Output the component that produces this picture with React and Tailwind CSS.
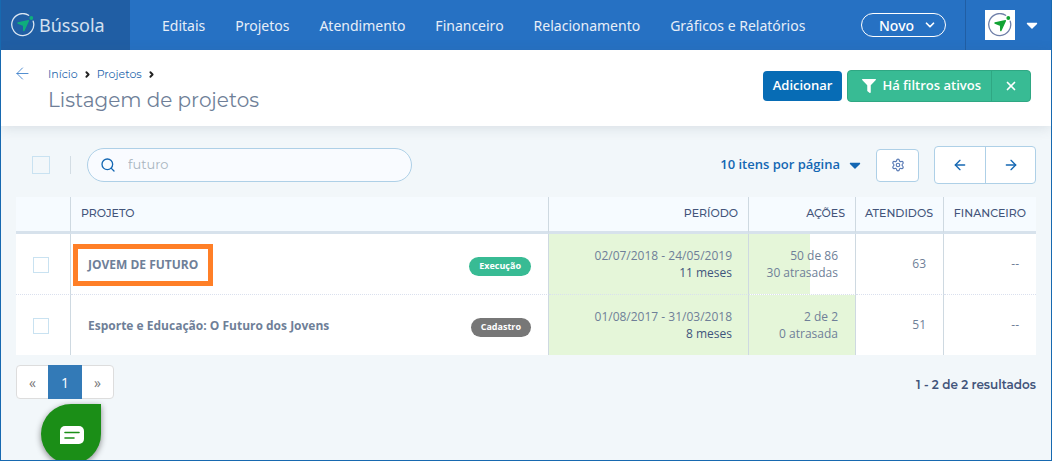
import { ArrowLeft, ArrowRight, ChevronDown, ChevronRight, Search, Settings, X } from "lucide-react";
import { FaCaretDown, FaFilter } from "react-icons/fa";

const menu = [
  "Editais",
  "Projetos",
  "Atendimento",
  "Financeiro",
  "Relacionamento",
  "Gráficos e Relatórios",
];

const projects = [
  {
    id: 1,
    name: "JOVEM DE FUTURO",
    highlighted: true,
    status: "Execução",
    statusColor: "bg-[#38bb94]",
    period: "02/07/2018 - 24/05/2019",
    duration: "11 meses",
    actions: "50 de 86",
    late: "30 atrasadas",
    progress: 58,
    attended: 63,
    financial: "--",
  },
  {
    id: 2,
    name: "Esporte e Educação: O Futuro dos Jovens",
    highlighted: false,
    status: "Cadastro",
    statusColor: "bg-[#777777]",
    period: "01/08/2017 - 31/03/2018",
    duration: "8 meses",
    actions: "2 de 2",
    late: "0 atrasada",
    progress: 100,
    attended: 51,
    financial: "--",
  },
];

const CompassIcon = ({ className, ring, needle }) => (
  <svg viewBox="0 0 24 24" className={className} fill="none" aria-hidden="true">
    <path
      d="M17.6 2.3A11 11 0 1 0 22.2 8.2"
      stroke={ring}
      strokeWidth="1.3"
      strokeLinecap="round"
    />
    <path
      d="M7 10 17.4 7.8 12.8 17.6 12.6 12.3Z"
      fill={needle}
      stroke={needle}
      strokeWidth="1.4"
      strokeLinejoin="round"
    />
    <circle cx="20.3" cy="5" r="1.9" fill={needle} />
  </svg>
);

const CheckBox = ({ label, className }) => (
  <input
    type="checkbox"
    aria-label={label}
    className={`block appearance-none border border-[#c9e2f1] checked:bg-[#0a6cb5] ${className}`}
  />
);

const Navbar = () => (
  <header className="flex h-[50px] items-stretch bg-[#2671c3] text-[#e6eef8]">
    <a href="#" className="flex w-[129px] shrink-0 items-center gap-1 bg-[#205ea4] pl-[10px]">
      <CompassIcon className="size-6 shrink-0" ring="#dbe6f2" needle="#0fae7c" />
      <span className="font-['Noto_Sans',sans-serif] text-[18px] leading-6 text-[#d3e0ef]">
        Bússola
      </span>
    </a>
    <nav className="flex flex-1 items-center gap-[30px] pl-8 font-['Noto_Sans',sans-serif] text-[14px] whitespace-nowrap">
      {menu.map((item) => (
        <a key={item} href="#">
          {item}
        </a>
      ))}
    </nav>
    <div className="flex items-center pr-[19px]">
      <button className="flex h-6 w-[85px] items-center justify-between rounded-full border border-white pr-2 pl-[17px] font-['Noto_Sans',sans-serif] text-[14px] font-medium text-white">
        Novo
        <ChevronDown size={14} strokeWidth={3} />
      </button>
    </div>
    <button
      aria-label="Conta"
      className="flex w-[86px] items-center gap-2 border-l border-[#205ea4] pl-[19px] text-white"
    >
      <span className="flex size-[30px] items-center justify-center bg-white">
        <CompassIcon className="size-6" ring="#6f7fa8" needle="#12a334" />
      </span>
      <FaCaretDown size={18} />
    </button>
  </header>
);

const PageHeader = () => (
  <section className="relative flex h-[76px] justify-between bg-white pr-5 pl-3 shadow-[0_2px_12px_rgba(60,80,100,0.14)]">
    <div className="flex gap-4 pt-4">
      <a href="#" aria-label="Voltar" className="-mt-[2px] h-4 text-[#2671c3]">
        <ArrowLeft size={19} strokeWidth={1} />
      </a>
      <div>
        <nav className="flex h-4 items-center gap-[5px] font-['Montserrat','Inter',sans-serif] text-[11px] text-[#1f67ad]">
          <a href="#">Início</a>
          <ChevronRight size={9} strokeWidth={5} className="text-[#222222]" />
          <a href="#">Projetos</a>
          <ChevronRight size={9} strokeWidth={5} className="text-[#222222]" />
        </nav>
        <h1 className="mt-1 font-['Montserrat','Inter',sans-serif] text-[20px] leading-7 text-[#6f7f98]">
          Listagem de projetos
        </h1>
      </div>
    </div>
    <div className="flex items-center gap-[5px] pb-1 text-[13px] font-semibold text-white">
      <button className="h-[30px] rounded bg-[#076cb5] px-[10px]">Adicionar</button>
      <div className="flex h-8 rounded border border-[#2fa783] bg-[#38bb94]">
        <button className="flex items-center gap-[6px] pr-[10px] pl-[14px]">
          <FaFilter size={14} />
          Há filtros ativos
        </button>
        <button
          aria-label="Limpar filtros"
          className="flex w-[39px] items-center justify-center border-l border-[#2fa783]"
        >
          <X size={14} strokeWidth={3} />
        </button>
      </div>
    </div>
  </section>
);

const Toolbar = () => (
  <div className="flex h-[38px] items-center justify-between">
    <div className="flex items-center">
      <CheckBox label="Selecionar todos" className="ml-4 size-[18px]" />
      <span className="ml-5 h-[18px] border-l border-[#d3dde4]" />
      <label className="ml-4 flex h-[34px] w-[325px] items-center gap-3 rounded-full border border-[#aed0e7] bg-[#f9fbff] pl-3">
        <Search size={16} strokeWidth={2} className="text-[#1467b3]" />
        <input
          type="text"
          aria-label="Buscar projeto"
          defaultValue="futuro"
          className="min-w-0 flex-1 bg-transparent font-['Montserrat','Inter',sans-serif] text-[13px] text-[#a9b5c0] outline-none"
        />
      </label>
    </div>
    <div className="flex items-center">
      <div className="relative mr-3 flex items-center text-[#1467b3]">
        <select
          aria-label="Itens por página"
          className="field-sizing-content appearance-none bg-transparent pr-6 text-[13px] font-semibold"
        >
          <option>10 itens por página</option>
        </select>
        <FaCaretDown size={18} className="pointer-events-none absolute right-0" />
      </div>
      <button
        aria-label="Configurações"
        className="mr-[15px] flex h-[33px] w-[43px] items-center justify-center rounded border border-[#aed0e7] bg-white text-[#5a7bb5]"
      >
        <Settings size={14} strokeWidth={2} />
      </button>
      <div className="flex h-[38px] rounded border border-[#aed0e7] bg-white text-[#1467b3]">
        <button
          aria-label="Página anterior"
          className="flex w-[51px] items-center justify-center border-r border-[#aed0e7]"
        >
          <ArrowLeft size={16} strokeWidth={2} />
        </button>
        <button aria-label="Próxima página" className="flex w-[49px] items-center justify-center">
          <ArrowRight size={16} strokeWidth={2} />
        </button>
      </div>
    </div>
  </div>
);

const ProjectRow = ({ project, last }) => {
  const line = last ? "" : "border-b border-b-[#dae0ee] [border-bottom-style:dotted]";

  return (
    <tr className={last ? "h-[60px]" : "h-[61px]"}>
      <td className={`border-r border-r-[#ced9e1] bg-white pt-[2px] pl-[17px] ${line}`}>
        <CheckBox label={`Selecionar ${project.name}`} className="size-4" />
      </td>
      <td className={`border-r border-r-[#ced9e1] bg-white pt-[2px] pr-[17px] pl-[2px] ${line}`}>
        <div className="flex items-center justify-between">
          <a
            href="#"
            className={`flex h-[42px] items-center border-5 px-[10px] text-[12px] font-bold text-[#6f7f98] ${
              project.highlighted ? "border-[#ff7f27]" : "border-transparent"
            }`}
          >
            {project.name}
          </a>
          <span
            className={`mt-[2px] flex h-[19px] items-center rounded-full px-[10px] text-[9px] font-bold text-white ${project.statusColor}`}
          >
            {project.status}
          </span>
        </div>
      </td>
      <td className={`border-r border-r-[#ced9e1] bg-[#e5f6d9] pr-4 leading-[17px] ${line}`}>
        <p>{project.period}</p>
        <p className="text-[#3f557c]">{project.duration}</p>
      </td>
      <td className={`relative border-r border-r-[#ced9e1] bg-white pr-[17px] leading-[17px] ${line}`}>
        <div
          className="absolute inset-y-0 left-0 bg-[#e5f6d9]"
          style={{ width: `${project.progress}%` }}
        />
        <p className="relative">{project.actions}</p>
        <p className="relative">{project.late}</p>
      </td>
      <td className={`border-r border-r-[#ced9e1] bg-white pr-[17px] ${line}`}>
        {project.attended}
      </td>
      <td className={`bg-white pr-[17px] ${line}`}>{project.financial}</td>
    </tr>
  );
};

const ProjectTable = () => (
  <table className="mt-[13px] w-full table-fixed border-separate border-spacing-0 text-right text-[12px] text-[#6f7f98]">
    <colgroup>
      <col className="w-[55px]" />
      <col />
      <col className="w-[200px]" />
      <col className="w-[107px]" />
      <col className="w-[88px]" />
      <col className="w-[92px]" />
    </colgroup>
    <thead>
      <tr className="h-[37px] bg-[#f6fbff] font-['Montserrat','Inter',sans-serif] text-[11px] text-[#42547a] *:border-b-3 *:border-b-[#d7e2ec] *:pb-[2px] *:font-medium">
        <th className="border-r border-r-[#ced9e1]" />
        <th className="border-r border-r-[#ced9e1] pl-[10px] text-left">PROJETO</th>
        <th className="border-r border-r-[#ced9e1] pr-[10px]">PERÍODO</th>
        <th className="border-r border-r-[#ced9e1] pr-[10px]">AÇÕES</th>
        <th className="border-r border-r-[#ced9e1] pr-[10px]">ATENDIDOS</th>
        <th className="pr-[10px]">FINANCEIRO</th>
      </tr>
    </thead>
    <tbody>
      {projects.map((project, index) => (
        <ProjectRow
          key={project.id}
          project={project}
          last={index === projects.length - 1}
        />
      ))}
    </tbody>
  </table>
);

const Pagination = () => (
  <div className="mt-[10px] flex items-start justify-between">
    <nav className="flex h-[34px] rounded border border-[#dddddd] bg-white text-[#777777]">
      <button aria-label="Anterior" className="w-[31px] text-[14px]">
        «
      </button>
      <button className="-my-px w-[34px] bg-[#337ab7] text-[14px] text-white">1</button>
      <button aria-label="Próxima" className="w-[31px] text-[14px]">
        »
      </button>
    </nav>
    <p className="pt-3 font-['Montserrat','Inter',sans-serif] text-[12px] leading-4 font-semibold text-[#42547a]">
      1 - 2 de 2 resultados
    </p>
  </div>
);

const ChatButton = () => (
  <button
    aria-label="Abrir chat"
    className="absolute -bottom-1 left-10 flex size-[60px] items-center justify-center rounded-full rounded-tr-md bg-[#1b8e17] shadow-[0_2px_6px_rgba(0,0,0,0.45)]"
  >
    <svg viewBox="0 0 24 18" className="mt-[2px] ml-px h-[18px] w-6" aria-hidden="true">
      <path d="M5 0h14a5 5 0 0 1 5 5v8a5 5 0 0 1-5 5H0V5a5 5 0 0 1 5-5Z" fill="#fff" />
      <path d="M5 6.5h14M5 12h9" stroke="#1b8e17" strokeWidth="1.6" strokeLinecap="round" />
    </svg>
  </button>
);

export default function App() {
  return (
    <div className="relative min-h-screen overflow-hidden border-x border-b border-[#1769b0] bg-[#f2f7fa] font-['Open_Sans',sans-serif]">
      <Navbar />
      <PageHeader />
      <main className="px-[15px] pt-5">
        <Toolbar />
        <ProjectTable />
        <Pagination />
      </main>
      <ChatButton />
    </div>
  );
}
